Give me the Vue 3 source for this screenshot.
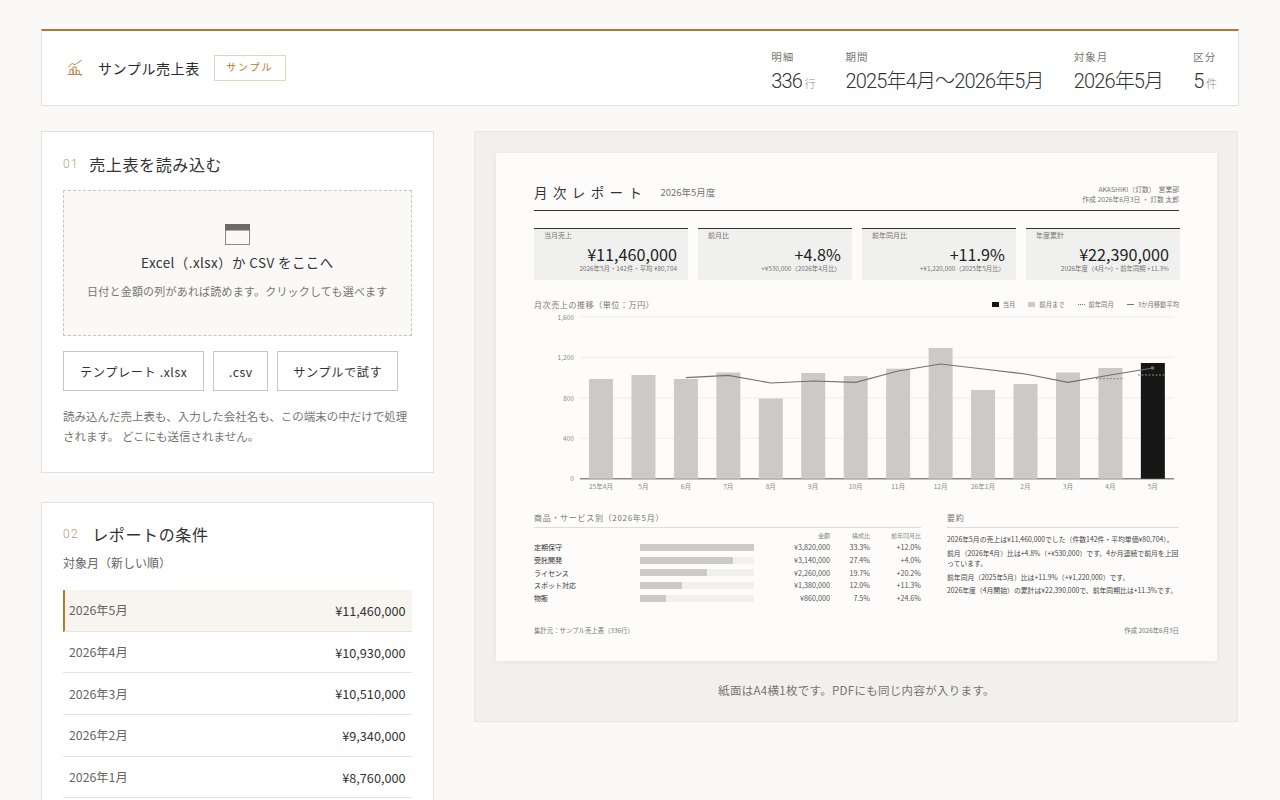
<script setup>
const stats = [
  { label: '明細', value: '336', unit: '行' },
  { label: '期間', value: '2025年4月〜2026年5月' },
  { label: '対象月', value: '2026年5月' },
  { label: '区分', value: '5', unit: '件' }
]
const months = [
  ['2026年5月', '¥11,460,000'], ['2026年4月', '¥10,930,000'], ['2026年3月', '¥10,510,000'],
  ['2026年2月', '¥9,340,000'], ['2026年1月', '¥8,760,000']
]
const kpis = [
  { l: '当月売上', v: '¥11,460,000', s: '2026年5月・142件・平均 ¥80,704' },
  { l: '前月比', v: '+4.8%', s: '+¥530,000（2026年4月比）' },
  { l: '前年同月比', v: '+11.9%', s: '+¥1,220,000（2025年5月比）' },
  { l: '年度累計', v: '¥22,390,000', s: '2026年度（4月〜）・前年同期 +11.3%' }
]
const x0 = 55
const pitch = 42.45
const tops = [379, 375, 379, 372.5, 398.5, 373, 376, 368.7, 348, 390, 384, 372.5, 368, 363]
const labels = ['25年4月', '5月', '6月', '7月', '8月', '9月', '10月', '11月', '12月', '26年1月', '2月', '3月', '4月', '5月']
const base = 478.7
const bars = tops.map((t, i) => ({ x: x0 + i * pitch, y: t, h: base - t, cx: x0 + 12 + i * pitch, label: labels[i], cur: i === 13 }))
const grid = [[0, 478.7], [400, 438.2], [800, 398], [1200, 357.3], [1600, 317]]
const avgY = [377.7, 375.3, 383, 381, 382.3, 371, 364, 369, 374, 382.3, 375, 368]
const avg = avgY.map((y, i) => `${(x0 + 12 + (i + 2) * pitch).toFixed(1)},${y}`).join(' ')
const svc = [
  { n: '定期保守', w: 100, a: '¥3,820,000', r: '33.3%', y: '+12.0%' },
  { n: '受託開発', w: 82, a: '¥3,140,000', r: '27.4%', y: '+4.0%' },
  { n: 'ライセンス', w: 59, a: '¥2,260,000', r: '19.7%', y: '+20.2%' },
  { n: 'スポット対応', w: 36.5, a: '¥1,380,000', r: '12.0%', y: '+11.3%' },
  { n: '物販', w: 23, a: '¥860,000', r: '7.5%', y: '+24.6%' }
]
</script>

<template>
  <div class="page">
    <header class="top">
      <div class="brand">
        <svg class="logo" width="18" height="18" viewBox="0 0 18 18" fill="none" stroke="#bd8c48" stroke-width="1">
          <path d="M1.5 15.5h14" />
          <path d="M4 15.5v-5h3v5M7 15.5V8h3.2v7.5M10.2 15.5v-3.8h3v3.8" />
          <path d="M2.2 8 6 4.6l3 1L15.8 1" />
          <circle cx="15" cy="15.8" r="1" fill="#bd8c48" stroke="none" />
        </svg>
        <span class="brand-name">サンプル売上表</span>
        <span class="tag">サンプル</span>
      </div>
      <div class="stats">
        <div v-for="s in stats" :key="s.label" class="stat">
          <div class="stat-l">{{ s.label }}</div>
          <div class="stat-v">{{ s.value }}<small v-if="s.unit">{{ s.unit }}</small></div>
        </div>
      </div>
    </header>

    <div class="cols">
      <div class="left">
        <section class="card first">
          <h2><span class="no">01</span>売上表を読み込む</h2>
          <div class="drop">
            <svg width="25" height="21" viewBox="0 0 25 21" class="drop-ic">
              <rect x="0.5" y="0.5" width="24" height="20" fill="none" stroke="#8a8984" />
              <rect x="0" y="0" width="25" height="6.5" fill="#6b6a67" />
            </svg>
            <div class="drop-t">Excel（.xlsx）か CSV をここへ</div>
            <div class="drop-s">日付と金額の列があれば読めます。クリックしても選べます</div>
          </div>
          <div class="btns">
            <button class="b1">テンプレート .xlsx</button>
            <button class="b2">.csv</button>
            <button>サンプルで試す</button>
          </div>
          <p class="note">読み込んだ売上表も、入力した会社名も、この端末の中だけで処理されます。 どこにも送信されません。</p>
        </section>

        <section class="card second">
          <h2><span class="no">02</span>レポートの条件</h2>
          <div class="sub">対象月（新しい順）</div>
          <ul class="months">
            <li v-for="(m, i) in months" :key="m[0]" :class="{ on: i === 0 }">
              <span class="mn">{{ m[0] }}</span><span class="mv">{{ m[1] }}</span>
            </li>
          </ul>
        </section>
      </div>

      <div class="preview">
        <article class="paper">
          <div class="p-head">
            <div class="p-title"><strong>月次レポート</strong><span>2026年5月度</span></div>
            <div class="p-org">AKASHIKI（灯数）&nbsp; 営業部<br />作成 2026年6月3日 ・ 灯数 太郎</div>
          </div>
          <div class="kpis">
            <div v-for="k in kpis" :key="k.l" class="kpi">
              <div class="kpi-l">{{ k.l }}</div>
              <div class="kpi-v">{{ k.v }}</div>
              <div class="kpi-s">{{ k.s }}</div>
            </div>
          </div>
          <div class="chart-head">
            <span class="chart-t">月次売上の推移（単位：万円）</span>
            <span class="legend">
              <i class="lg k"></i>当月
              <i class="lg g"></i>前月まで
              <i class="lg d"></i>前年同月
              <i class="lg l"></i>3か月移動平均
            </span>
          </div>
          <svg class="chart" width="645" height="190" viewBox="0 305 645 190">
            <g v-for="g in grid" :key="g[0]">
              <line x1="46" :x2="640" :y1="g[1]" :y2="g[1]" :stroke="g[0] === 0 ? '#8a8984' : '#eeedea'" :stroke-width="g[0] === 0 ? 1.4 : 1" />
              <text x="40" :y="g[1] + 2.5" text-anchor="end" class="ax">{{ g[0].toLocaleString('en-US') }}</text>
            </g>
            <g v-for="b in bars" :key="b.cx">
              <rect :x="b.x" :y="b.y" width="24" :height="b.h" :fill="b.cur ? '#161616' : '#cbcac7'" />
              <text :x="b.cx" y="488.5" text-anchor="middle" class="ax">{{ b.label }}</text>
            </g>
            <line x1="562" x2="589" y1="378.7" y2="378.7" stroke="#8a8984" stroke-dasharray="2 1.5" />
            <line x1="604" x2="632" y1="375" y2="375" stroke="#8a8984" stroke-dasharray="2 1.5" />
            <polyline :points="avg" fill="none" stroke="#72716e" stroke-width="1.2" />
            <circle cx="618.5" cy="368" r="1.8" fill="#72716e" />
          </svg>
          <div class="bottom">
            <div class="svc">
              <div class="sec-t">商品・サービス別（2026年5月）</div>
              <div class="svc-row svc-h"><span></span><span></span><span>金額</span><span>構成比</span><span>前年同月比</span></div>
              <div v-for="s in svc" :key="s.n" class="svc-row">
                <span class="svc-n">{{ s.n }}</span>
                <span class="track"><span class="fill" :style="{ width: s.w + '%' }"></span></span>
                <span>{{ s.a }}</span><span>{{ s.r }}</span><span>{{ s.y }}</span>
              </div>
            </div>
            <div class="sum">
              <div class="sec-t">要約</div>
              <p>2026年5月の売上は¥11,460,000でした（件数142件・平均単価¥80,704）。</p>
              <p>前月（2026年4月）比は+4.8%（+¥530,000）です。4か月連続で前月を上回っています。</p>
              <p>前年同月（2025年5月）比は+11.9%（+¥1,220,000）です。</p>
              <p>2026年度（4月開始）の累計は¥22,390,000で、前年同期比は+11.3%です。</p>
            </div>
          </div>
          <div class="p-foot"><span>集計元：サンプル売上表（336行）</span><span>作成 2026年6月3日</span></div>
        </article>
        <div class="caption">紙面はA4横1枚です。PDFにも同じ内容が入ります。</div>
      </div>
    </div>
  </div>
</template>

<style>
html, body { margin: 0; background: #faf9f7; height: 800px; overflow: hidden; }
</style>

<style scoped>
.page {
  box-sizing: border-box;
  width: 1198px;
  margin: 0 auto;
  padding-top: 29px;
  font-family: "Noto Sans CJK JP", sans-serif;
  color: #1c1c1c;
}
.top {
  box-sizing: border-box;
  height: 77px;
  background: #fff;
  border: 1px solid #e3e1dc;
  border-top: 2px solid #b0782f;
  display: flex;
  align-items: center;
  justify-content: space-between;
  padding: 0 21px 0 24px;
}
.brand { display: flex; align-items: center; }
.logo { margin-right: 14px; }
.brand-name { font-size: 14px; letter-spacing: 0.6px; margin-right: 14px; color: #2a2a2a; }
.tag {
  border: 1px solid #e6d5bd;
  color: #b87a2b;
  font-size: 10px;
  letter-spacing: 1.8px;
  padding: 0 11.5px;
  height: 26px;
  line-height: 22px;
  box-sizing: border-box;
}
.stats { display: flex; gap: 30px; padding-top: 10px; }
.stat-l { font-size: 10.5px; letter-spacing: 1px; color: #77756f; line-height: 16px; }
.stat-v { font-family: "Roboto", "Noto Sans CJK JP", sans-serif; font-weight: 300; font-size: 20px; letter-spacing: -0.85px; line-height: 30px; margin-top: 1px; color: #333; white-space: nowrap; }
.stat-v small { font-family: "Noto Sans CJK JP", sans-serif; font-size: 11px; letter-spacing: 0; color: #8d8b85; margin-left: 2.5px; }

.cols { display: grid; grid-template-columns: 392.6px 764px; column-gap: 40.4px; margin-top: 25px; align-items: start; }
.left { display: flex; flex-direction: column; gap: 29px; }
.card { box-sizing: border-box; background: #fff; border: 1px solid #e3e1dc; padding: 21px; }
.card.first { padding-top: 20px; }
.card.second { padding-top: 19px; }
h2 { margin: 0; font-weight: 400; font-size: 16px; line-height: 24px; letter-spacing: 0.64px; display: flex; align-items: center; color: #333; }
.no { font-family: "Roboto", sans-serif; font-weight: 300; font-size: 12px; color: #bd9a6b; letter-spacing: 1.4px; margin-right: 13px; }
.first .no { margin-right: 10px; }
.drop {
  box-sizing: border-box;
  height: 146px;
  margin-top: 14px;
  background: #faf9f7;
  border: 1px dashed #c8c6c0;
  display: flex;
  flex-direction: column;
  align-items: center;
}
.drop-ic { margin-top: 33px; }
.drop-t { font-size: 13.5px; line-height: 20px; margin-top: 7px; letter-spacing: 0.4px; color: #333; }
.drop-s { font-size: 11px; line-height: 18px; margin-top: 10px; color: #77756f; letter-spacing: 0.2px; }
.btns { display: flex; gap: 9px; margin-top: 15px; }
button {
  box-sizing: border-box;
  height: 40px;
  background: #fff;
  border: 1px solid #c8c6c0;
  font: inherit;
  font-size: 12.2px;
  letter-spacing: 0.6px;
  padding: 1px 15px 0;
  color: #333;
}
.btns .b1 { padding: 1px 16px 0; }
.btns .b2 { padding: 1px 14.5px 0; }
.note { margin: 16px 0 0; font-size: 11.5px; line-height: 19.5px; color: #77756f; padding-bottom: 5px; }
.sub { font-size: 12px; color: #66645f; line-height: 20px; margin-top: 7px; }
.months { list-style: none; padding: 0; margin: 17px 0 0; }
.months li {
  box-sizing: border-box;
  height: 41.7px;
  display: flex;
  align-items: center;
  justify-content: space-between;
  padding: 0 6px 0 6px;
  border-bottom: 1px solid #e6e4df;
}
.months li.on { background: #f8f4ef; border-left: 2px solid #b87a2b; padding-left: 4px; }
.mn { font-size: 12.3px; color: #66645f; }
.mv { font-size: 12.7px; color: #333; }

.preview { box-sizing: border-box; background: #f1f0ed; border: 1px solid #e8e6e2; padding: 21px 20px 0 21px; height: 591px; }
.paper { box-sizing: border-box; height: 508px; background: #fdfcfb; padding: 26px 38px 0; box-shadow: 0 1px 6px rgba(0,0,0,.05); }
.p-head { box-sizing: border-box; display: flex; justify-content: space-between; align-items: flex-end; border-bottom: 1.5px solid #333; height: 32px; }
.p-title { display: flex; align-items: center; height: 26px; margin-bottom: 5px; }
.p-title strong { font-weight: 400; font-size: 13.5px; letter-spacing: 5.4px; color: #333; }
.p-title span { font-size: 9.5px; color: #77756f; margin-left: 13px; }
.p-org { font-size: 6.8px; line-height: 10px; color: #77756f; text-align: right; margin-bottom: 6px; }
.kpis { display: grid; grid-template-columns: repeat(4, 154px); gap: 10px; margin-top: 17px; }
.kpi { box-sizing: border-box; height: 52px; background: #f0f0ef; border-top: 1.5px solid #333; padding: 1px 11px 0 10px; text-align: right; }
.kpi-l { font-size: 7px; line-height: 10px; color: #77756f; text-align: left; }
.kpi-v { font-size: 16.2px; line-height: 20px; margin-top: 4px; color: #222; }
.kpi-s { font-size: 6.4px; line-height: 10px; color: #77756f; }
.chart-head { display: flex; justify-content: space-between; align-items: center; margin-top: 17px; height: 14px; }
.chart-t { font-size: 8px; letter-spacing: 0.6px; color: #77756f; }
.legend { display: flex; align-items: center; font-size: 6.3px; color: #77756f; }
.lg { display: inline-block; width: 7px; height: 5px; margin: 0 4px 0 13px; }
.lg.k { background: #161616; }
.lg.g { background: #cbcac7; }
.lg.d { height: 0; border-top: 1.5px dotted #77756f; }
.lg.l { height: 0; border-top: 1.5px solid #77756f; }
.chart { display: block; margin-top: -6px; }
.ax { font-size: 6.6px; fill: #8a8984; font-family: "Noto Sans CJK JP", sans-serif; }
.bottom { display: grid; grid-template-columns: 387px 232px; column-gap: 26px; margin-top: 17px; }
.sec-t { font-size: 8px; letter-spacing: 0.7px; color: #77756f; line-height: 12px; padding-bottom: 3px; border-bottom: 1.5px solid #dddcd9; }
.svc-row { display: grid; grid-template-columns: 106px 114px 76px 40px 51px; font-size: 7.2px; line-height: 12.8px; text-align: right; align-items: center; color: #555; }
.svc-h { color: #8a8984; font-size: 6px; line-height: 10px; margin-top: 3px; }
.svc-n { text-align: left; color: #333; font-size: 7px; }
.track { display: block; height: 7px; background: #f0f0ef; }
.fill { display: block; height: 7px; background: #cbcac7; }
.sum p { margin: 3px 0 0; font-size: 6.85px; line-height: 10.5px; color: #444; }
.sum .sec-t + p { margin-top: 6px; }
.p-foot { display: flex; justify-content: space-between; font-size: 6.4px; color: #77756f; margin-top: 21px; }
.caption { text-align: center; font-size: 11.5px; color: #77756f; margin-top: 21px; letter-spacing: 0.3px; }
</style>
